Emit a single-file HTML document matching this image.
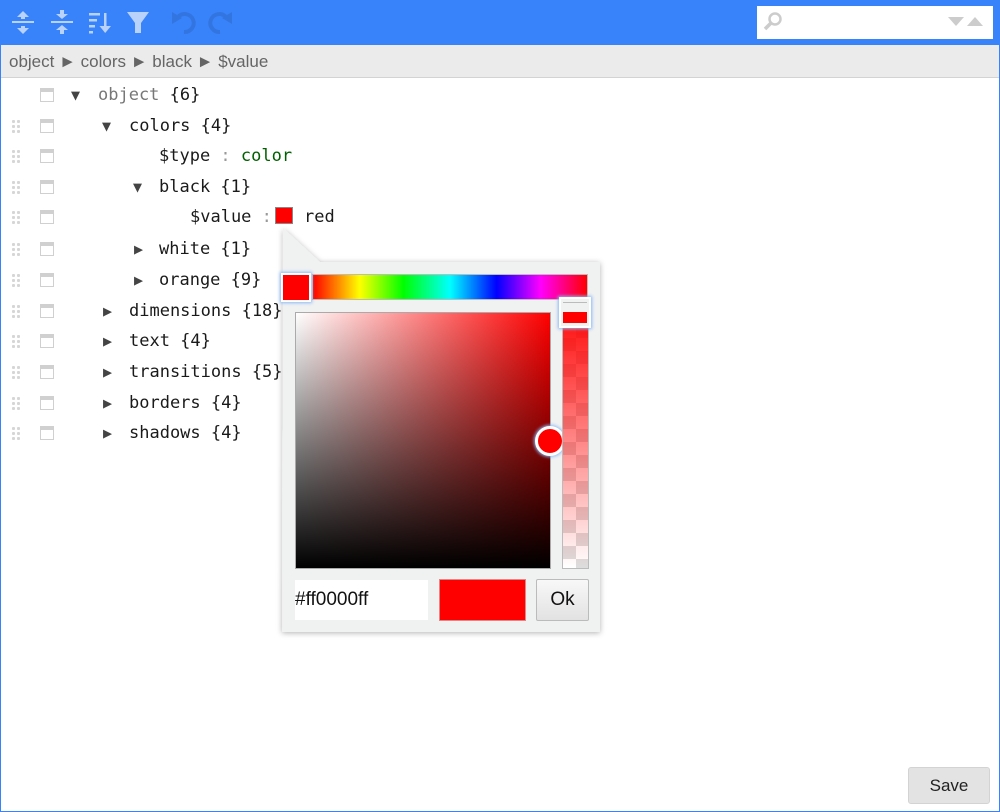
<!DOCTYPE html>
<html><head><meta charset="utf-8"><style>
*{box-sizing:border-box}
body{margin:0;width:1000px;height:812px;overflow:hidden;background:#fff;font-family:"Liberation Sans",Arial,sans-serif;position:relative}
.frame{position:absolute;left:0;top:0;width:1000px;height:812px;border:1px solid #3883fa}
.tb{position:absolute;left:0;top:0;width:1000px;height:45px;background:#3883fa}
.bc{position:absolute;left:1px;top:45px;width:998px;height:33px;background:#ebebeb;border-bottom:1px solid #d3d3d3;color:#656565;font-size:17px;line-height:34px;padding-left:8px}
.search{position:absolute;left:757px;top:6px;width:236px;height:33px;background:#fff}
.row{position:absolute;left:0;height:30px;font-family:"DejaVu Sans Mono","Liberation Mono",monospace;font-size:17px;line-height:30px;color:#1a1a1a;white-space:nowrap}
.drag{position:absolute;left:11px;top:8px;width:10px;height:16px;background:radial-gradient(circle,#d6d6d6 1.6px,transparent 1.7px) 0 0/5px 5px}
.cb{position:absolute;left:40px;top:8px;width:14px;height:14px;border:1.5px solid #d0d0d0;border-top-width:4px}
.tri{position:absolute;color:#444;font-size:15px}
.k{position:absolute}
.popup{position:absolute;left:0;top:0}
</style></head><body>
<div class="tb">
<svg width="260" height="45" style="position:absolute;left:0;top:0">
<g fill="#cfe0fc" opacity=".85">
<rect x="12" y="21" width="22" height="2"/><polygon points="23,11 17,17 29,17"/><rect x="21" y="16" width="4" height="3"/><polygon points="23,34 17,28 29,28"/><rect x="21" y="26" width="4" height="3"/>
<rect x="51" y="21" width="22" height="2"/><polygon points="62,19 56,14 68,14"/><rect x="60" y="10" width="4" height="5"/><polygon points="62,25 56,30 68,30"/><rect x="60" y="29" width="4" height="5"/>
<rect x="89" y="13" width="11" height="2.5"/><rect x="89" y="19" width="8" height="2.5"/><rect x="89" y="25" width="6" height="2.5"/><rect x="89" y="31" width="4" height="2.5"/><rect x="104" y="13" width="2.5" height="16"/><polygon points="105.2,33 99.5,26 111,26"/>
<polygon points="127,12 149,12 141,23 141,33 135,33 135,23"/>
</g>
<g fill="none" stroke="#3275e0" stroke-width="4">
<path d="M178 17 A9 9 0 1 1 184 32"/><path d="M226 17 A9 9 0 1 0 220 32"/>
</g>
<polygon points="172,12 172,24 182,18" fill="#3275e0"/>
<polygon points="232,12 232,24 222,18" fill="#3275e0"/>
</svg>
<div class="search">
<svg width="236" height="33"><circle cx="18" cy="13" r="5.5" fill="none" stroke="#ccc" stroke-width="2.5"/><line x1="14" y1="17" x2="8" y2="23" stroke="#ccc" stroke-width="3.5"/>
<polygon points="191,11 207,11 199,20" fill="#ccc"/><polygon points="210,20 226,20 218,11" fill="#ccc"/></svg>
</div>
</div>
<div class="bc">object ► colors ► black ► $value</div>

<div class="row" style="top:80px;width:400px"><div class="cb"></div><span class="tri" style="left:71px">▼</span><span class="k" style="left:98px"><span style="color:#777">object</span> {6}</span></div>
<div class="row" style="top:111px;width:400px"><div class="drag"></div><div class="cb"></div><span class="tri" style="left:102px">▼</span><span class="k" style="left:129px">colors {4}</span></div>
<div class="row" style="top:141px;width:400px"><div class="drag"></div><div class="cb"></div><span class="k" style="left:159px">$type<span style="color:#999"> : </span><span style="color:#006000">color</span></span></div>
<div class="row" style="top:172px;width:400px"><div class="drag"></div><div class="cb"></div><span class="tri" style="left:133px">▼</span><span class="k" style="left:159px">black {1}</span></div>
<div class="row" style="top:202px;width:400px"><div class="drag"></div><div class="cb"></div><span class="k" style="left:190px">$value<span style="color:#999"> :</span></span><span style="position:absolute;left:275px;top:5px;width:18px;height:17px;background:#f00;border:1px solid #888"></span><span class="k" style="left:304px">red</span></div>
<div class="row" style="top:234px;width:400px"><div class="drag"></div><div class="cb"></div><span class="tri" style="left:134px">▶</span><span class="k" style="left:159px">white {1}</span></div>
<div class="row" style="top:265px;width:400px"><div class="drag"></div><div class="cb"></div><span class="tri" style="left:134px">▶</span><span class="k" style="left:159px">orange {9}</span></div>
<div class="row" style="top:296px;width:400px"><div class="drag"></div><div class="cb"></div><span class="tri" style="left:103px">▶</span><span class="k" style="left:129px">dimensions {18}</span></div>
<div class="row" style="top:326px;width:400px"><div class="drag"></div><div class="cb"></div><span class="tri" style="left:103px">▶</span><span class="k" style="left:129px">text {4}</span></div>
<div class="row" style="top:357px;width:400px"><div class="drag"></div><div class="cb"></div><span class="tri" style="left:103px">▶</span><span class="k" style="left:129px">transitions {5}</span></div>
<div class="row" style="top:388px;width:400px"><div class="drag"></div><div class="cb"></div><span class="tri" style="left:103px">▶</span><span class="k" style="left:129px">borders {4}</span></div>
<div class="row" style="top:418px;width:400px"><div class="drag"></div><div class="cb"></div><span class="tri" style="left:103px">▶</span><span class="k" style="left:129px">shadows {4}</span></div>

<svg class="popup" width="1000" height="812" style="pointer-events:none">
<defs><filter id="sh" x="-10%" y="-10%" width="120%" height="120%"><feDropShadow dx="0" dy="1" stdDeviation="3" flood-color="#000" flood-opacity=".3"/></filter></defs>
<polygon points="283,228 320,262 600,262 600,632 282,632" fill="#f0f1f1" filter="url(#sh)"/>
</svg>
<div style="position:absolute;left:312px;top:274px;width:276px;height:26px;border:1px solid #bbb;background:linear-gradient(to right,#f00,#ff0 17%,#0f0 33%,#0ff 50%,#00f 67%,#f0f 83%,#f00)"></div>
<div style="position:absolute;left:281px;top:273px;width:30px;height:29px;border:2px solid #fff;box-shadow:0 0 3px 1px #8ab8f5;background:#f00"></div>
<div style="position:absolute;left:295px;top:312px;width:256px;height:257px;border:1px solid #aaa;background:linear-gradient(to bottom,transparent,#000),linear-gradient(to right,#fff,#f00)"></div>
<div style="position:absolute;left:535px;top:426px;width:30px;height:30px;border-radius:50%;background:#f00;border:3px solid #fff;box-shadow:0 0 3px 1px #8ab8f5"></div>
<div style="position:absolute;left:562px;top:298px;width:27px;height:271px;border:1px solid #bbb;background:linear-gradient(to bottom,rgba(255,0,0,1),rgba(255,0,0,0)),repeating-conic-gradient(#ddd 0 25%,#fff 0 50%) 0 0/26px 26px"></div>
<div style="position:absolute;left:559px;top:297px;width:32px;height:31px;background:#f0f1f1;border:2px solid #fff;box-shadow:0 0 3px 1px #8ab8f5"><div style="position:absolute;left:2px;top:3px;width:24px;height:1px;background:#bbb"></div><div style="position:absolute;left:2px;top:13px;width:24px;height:11px;background:#f00"></div></div>
<div style="position:absolute;left:295px;top:580px;width:133px;height:40px;background:#fff;font-size:19px;line-height:40px;color:#111">#ff0000ff</div>
<div style="position:absolute;left:439px;top:579px;width:87px;height:42px;background:#f00;border:1px solid #d88"></div>
<div style="position:absolute;left:536px;top:579px;width:53px;height:42px;border:1px solid #bbb;border-radius:2px;background:linear-gradient(#f8f8f8,#e2e2e2);font-size:19px;line-height:40px;text-align:center;color:#111">Ok</div>

<div style="position:absolute;left:908px;top:767px;width:82px;height:37px;border:1px solid #d3d3d3;border-radius:3px;background:#e3e3e3;font-size:17px;line-height:35px;text-align:center;color:#222">Save</div>
<div class="frame"></div>
</body></html>
